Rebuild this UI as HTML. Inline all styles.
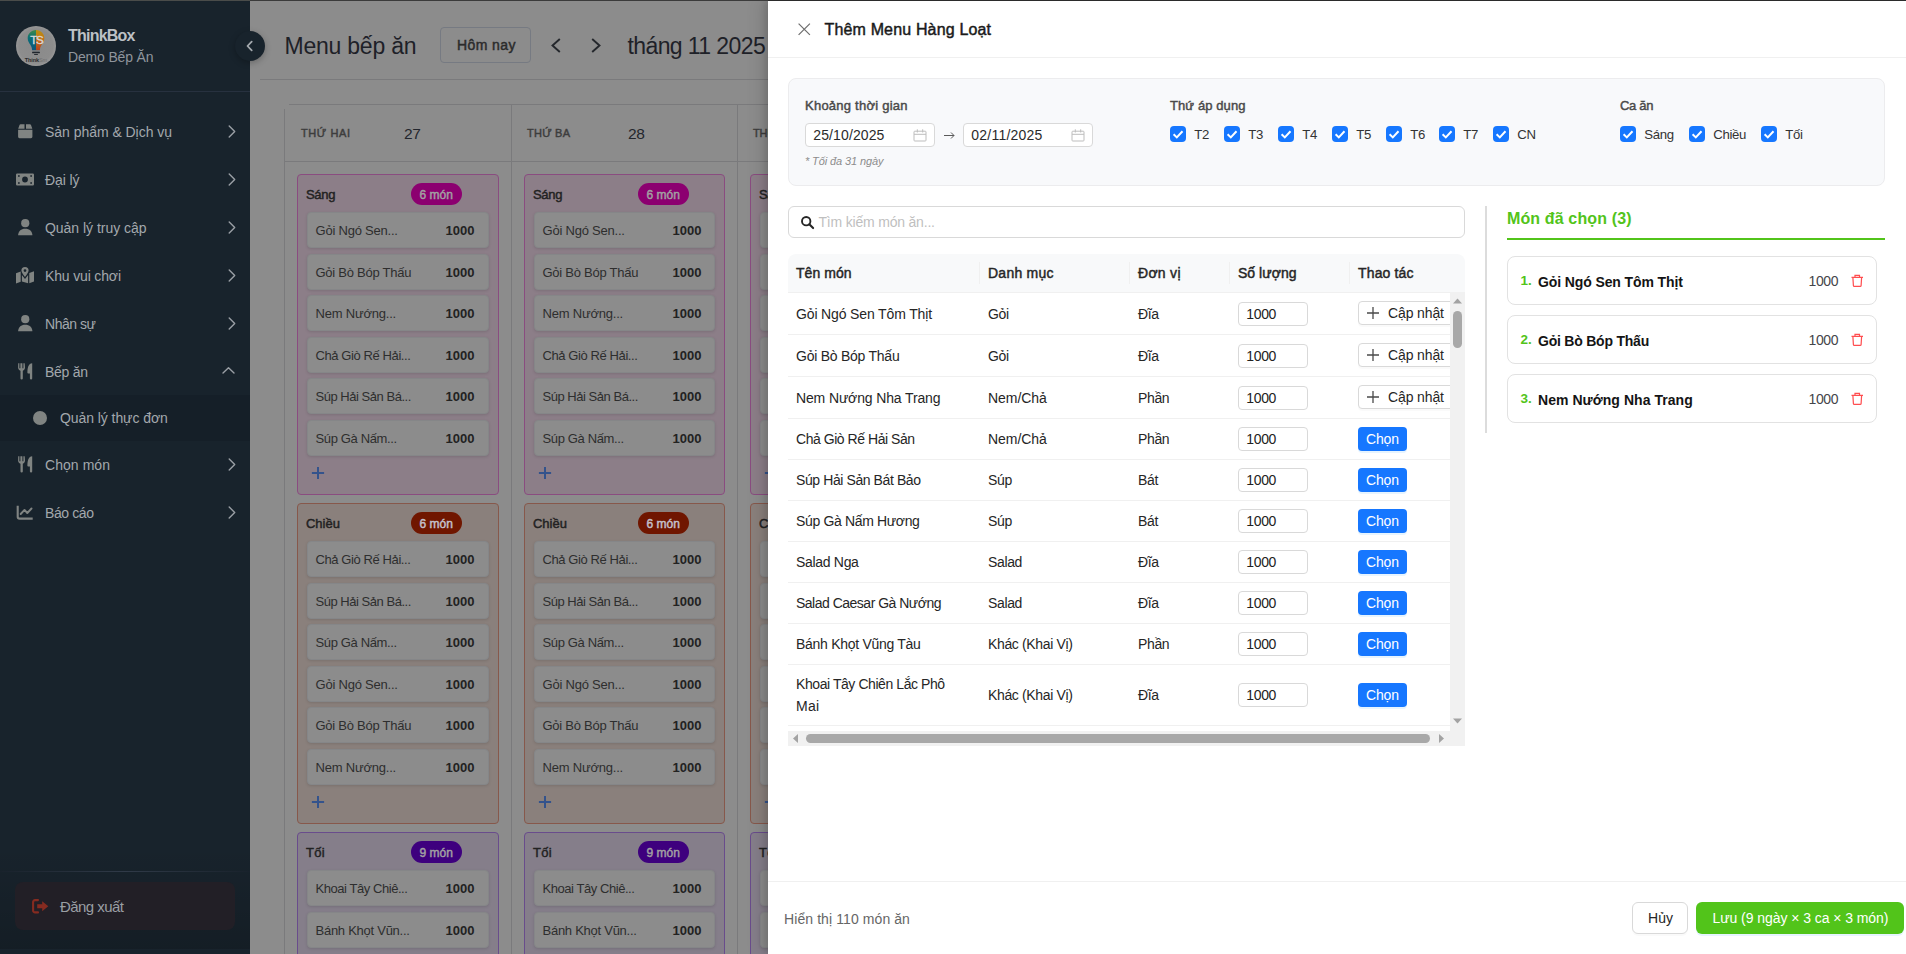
<!DOCTYPE html>
<html lang="vi"><head><meta charset="utf-8"><title>Menu bếp ăn</title>
<style>
*{box-sizing:border-box;margin:0;padding:0}
html,body{width:1906px;height:954px;overflow:hidden;background:#8c8c8c;font-family:"Liberation Sans",sans-serif;}
.t{position:absolute;white-space:nowrap;}
.b{position:absolute;}
svg{position:absolute;overflow:visible}
#side{position:absolute;left:0;top:0;width:250px;height:954px;background:#18232c;}
#main{position:absolute;left:250px;top:0;width:518px;height:954px;background:#8c8c8c;overflow:hidden}
#drawer{position:absolute;left:768px;top:0;width:1138px;height:954px;background:#fff;box-shadow:-6px 0 16px rgba(0,0,0,.12),-3px 0 6px rgba(0,0,0,.10);}
#topline{position:absolute;left:0;top:0;width:1906px;height:1px;background:linear-gradient(90deg,#4a4c4a 0,#4a4c4a 250px,#3b3b3b 250px,#3b3b3b 768px,#2b2b2b 768px);z-index:50}
</style></head><body>
<div id="side"><div class="b " style="left:0px;top:91px;width:250px;height:1px;background:#27313f"></div><svg style="left:16px;top:26px" width="40" height="40" viewBox="0 0 40 40">
<defs>
<linearGradient id="gl" x1="0" y1="0" x2="0" y2="1"><stop offset="0" stop-color="#3f8a49"/><stop offset=".4" stop-color="#0a6f76"/><stop offset="1" stop-color="#0d557b"/></linearGradient>
<linearGradient id="gr" x1="0" y1="0" x2="0" y2="1"><stop offset="0" stop-color="#b89212"/><stop offset=".45" stop-color="#c47216"/><stop offset="1" stop-color="#b3431f"/></linearGradient>
<radialGradient id="gc" cx=".5" cy=".5" r=".5"><stop offset="0" stop-color="#8a8a8a"/><stop offset=".85" stop-color="#8d8d8d"/><stop offset="1" stop-color="#979797"/></radialGradient>
</defs>
<circle cx="20" cy="20" r="20" fill="url(#gc)"/>
<path d="M20 4C15.300 4 11.700 7.700 11.700 12.200c0 2.800 1.300 4.600 2.500 6.400 1 1.500 1.900 3.100 1.900 5.600H20z" fill="url(#gl)"/>
<path d="M20 4c4.700 0 8.300 3.700 8.300 8.200 0 2.800-1.300 4.600-2.500 6.400-1 1.500-1.900 3.100-1.900 5.600H20z" fill="url(#gr)"/>
<rect x="16.100" y="24.300" width="7.800" height="1.300" fill="#747a7e"/>
<rect x="16.100" y="25.800" width="7.800" height="1.400" rx=".5" fill="#20262c"/>
<rect x="18" y="27.900" width="4" height="1" rx=".5" fill="#2a2f35"/>
<text x="20.300" y="17.500" font-size="11.500" font-family="Liberation Sans, sans-serif" fill="#d8d8d8" stroke="#d8d8d8" stroke-width=".35" text-anchor="middle" letter-spacing="-1.400">TS</text>
<text x="8.800" y="35.500" font-size="5.500" font-weight="700" font-family="Liberation Sans, sans-serif" fill="#2b2b2b" letter-spacing="-.1">Think<tspan fill="#707070" font-weight="400">Sm</tspan></text>
</svg><span id="t1" class="t " style="top:24px;font-size:16px;line-height:24px;color:#bdc1c5;font-weight:700;left:68px;letter-spacing:-0.770px;">ThinkBox</span><span id="t2" class="t " style="top:47px;font-size:14px;line-height:21px;color:#8f959c;left:68px;letter-spacing:-0.167px;">Demo Bếp Ăn</span><div class="b" style="left:235px;top:31px;width:30px;height:30px;border-radius:50%;background:#18232c;box-shadow:0 2px 6px rgba(0,0,0,.25);z-index:5"></div><svg style="left:245px;top:40px;z-index:6" width="8" height="12" viewBox="0 0 8 12"><g transform="translate(0.7 0)"><path d="M6 1.600L1.800 6l4.200 4.400" fill="none" stroke="#a4a9ae" stroke-width="1.800" stroke-linecap="round" stroke-linejoin="round"/></g></svg><div class="b " style="left:0px;top:395px;width:250px;height:46px;background:#151f28"></div><svg style="left:18px;top:124.0px" width="14.500" height="14.500" viewBox="0 0 14.500 14.500"><path d="M2.600 .3H6.500V4.700H.2L1.500 1.100A1.200 1.200 0 0 1 2.600 .3zM8 .3h3.900a1.200 1.200 0 0 1 1.100 .8L14.300 4.700H8zM.1 5.800H14.400V12.800a1.400 1.400 0 0 1-1.400 1.400H1.500A1.400 1.400 0 0 1 .1 12.800z" fill="#808482"/></svg><span id="t3" class="t " style="top:122px;font-size:14px;line-height:21px;color:#a3a8ad;left:45px;letter-spacing:-0.037px;">Sản phẩm &amp; Dịch vụ</span><svg style="left:228px;top:125.0px" width="8" height="13" viewBox="0 0 8 13"><path d="M1.200 1L6.700 6.500 1.200 12" fill="none" stroke="#9a9fa5" stroke-width="1.400" stroke-linecap="round" stroke-linejoin="round"/></svg><svg style="left:16px;top:173px" width="18" height="12" viewBox="0 0 18 12"><g transform="translate(0 0.5)"><path fill-rule="evenodd" d="M1.200 0H16.800A1.200 1.200 0 0 1 18 1.200V10.800A1.200 1.200 0 0 1 16.800 12H1.200A1.200 1.200 0 0 1 0 10.800V1.200A1.200 1.200 0 0 1 1.200 0zM2 1.700V3.300H3.700V1.700zM14.300 1.700V3.300H16V1.700zM2 8.700V10.300H3.700V8.700zM14.300 8.700V10.300H16V8.700zM9 3.100A2.900 2.900 0 1 0 9 8.900 2.900 2.900 0 1 0 9 3.100z" fill="#808482"/></g></svg><span id="t4" class="t " style="top:170px;font-size:14px;line-height:21px;color:#a3a8ad;left:45px;letter-spacing:-0.103px;">Đại lý</span><svg style="left:228px;top:173.0px" width="8" height="13" viewBox="0 0 8 13"><path d="M1.200 1L6.700 6.500 1.200 12" fill="none" stroke="#9a9fa5" stroke-width="1.400" stroke-linecap="round" stroke-linejoin="round"/></svg><svg style="left:18px;top:219.0px" width="14.500" height="16.500" viewBox="0 0 14.500 16.500"><circle cx="7.250" cy="4.200" r="4.100" fill="#808482"/><path d="M.1 16.300C.1 12.400 3 9.700 7.250 9.700S14.400 12.400 14.400 16.300z" fill="#808482"/></svg><span id="t5" class="t " style="top:218px;font-size:14px;line-height:21px;color:#a3a8ad;left:45px;letter-spacing:-0.029px;">Quản lý truy cập</span><svg style="left:228px;top:221.0px" width="8" height="13" viewBox="0 0 8 13"><path d="M1.200 1L6.700 6.500 1.200 12" fill="none" stroke="#9a9fa5" stroke-width="1.400" stroke-linecap="round" stroke-linejoin="round"/></svg><svg style="left:16px;top:267.0px" width="18" height="16.500" viewBox="0 0 18 16.500"><path fill-rule="evenodd" d="M9 0A3.600 3.600 0 0 1 12.600 3.600C12.600 5.600 10.300 8.300 9 10 7.700 8.300 5.400 5.600 5.400 3.600A3.600 3.600 0 0 1 9 0zM9 2.200A1.400 1.400 0 1 0 9 5 1.400 1.400 0 1 0 9 2.200z" fill="#808482"/><path d="M0 6.200L4.700 4.500V14.700L0 16.400zM13.300 6L18 4.300V14.500L13.300 16.200zM5.900 8.200L6.300 8.400 9 11.900 11.700 8.400 12.100 8.200V16.300L5.900 14.500z" fill="#808482"/></svg><span id="t6" class="t " style="top:266px;font-size:14px;line-height:21px;color:#a3a8ad;left:45px;letter-spacing:-0.152px;">Khu vui chơi</span><svg style="left:228px;top:269.0px" width="8" height="13" viewBox="0 0 8 13"><path d="M1.200 1L6.700 6.500 1.200 12" fill="none" stroke="#9a9fa5" stroke-width="1.400" stroke-linecap="round" stroke-linejoin="round"/></svg><svg style="left:18px;top:315.0px" width="14.500" height="16.500" viewBox="0 0 14.500 16.500"><circle cx="7.250" cy="4.200" r="4.100" fill="#808482"/><path d="M.1 16.300C.1 12.400 3 9.700 7.250 9.700S14.400 12.400 14.400 16.300z" fill="#808482"/></svg><span id="t7" class="t " style="top:314px;font-size:14px;line-height:21px;color:#a3a8ad;left:45px;letter-spacing:-0.456px;">Nhân sự</span><svg style="left:228px;top:317.0px" width="8" height="13" viewBox="0 0 8 13"><path d="M1.200 1L6.700 6.500 1.200 12" fill="none" stroke="#9a9fa5" stroke-width="1.400" stroke-linecap="round" stroke-linejoin="round"/></svg><svg style="left:18px;top:363.0px" width="14.500" height="16.500" viewBox="0 0 14.500 16.500"><path d="M.2 .3H1.400V5.200H2.400V.3H4.400V5.200H5.400V.3H6.700L7 4.600C7.100 6.200 6 7.300 4.800 7.800V15.400A1.100 1.100 0 0 1 2.500 15.400V7.800C1.100 7.300 0 6.200 .1 4.600zM14.200 .3V15.400A1.100 1.100 0 0 1 11.900 15.400V10.500H10.200C9.700 10.500 9.400 10.200 9.400 9.700 9.400 4.500 10.600 .5 14.200 .3z" fill="#808482"/></svg><span id="t8" class="t " style="top:362px;font-size:14px;line-height:21px;color:#a3a8ad;left:45px;letter-spacing:-0.275px;">Bếp ăn</span><svg style="left:222px;top:366px" width="13" height="8" viewBox="0 0 13 8"><g transform="translate(0 0.5)"><path d="M1 6.500L6.500 1.200 12 6.500" fill="none" stroke="#9a9fa5" stroke-width="1.400" stroke-linecap="round" stroke-linejoin="round"/></g></svg><svg style="left:18px;top:456.0px" width="14.500" height="16.500" viewBox="0 0 14.500 16.500"><path d="M.2 .3H1.400V5.200H2.400V.3H4.400V5.200H5.400V.3H6.700L7 4.600C7.100 6.200 6 7.300 4.800 7.800V15.400A1.100 1.100 0 0 1 2.500 15.400V7.800C1.100 7.300 0 6.200 .1 4.600zM14.200 .3V15.400A1.100 1.100 0 0 1 11.900 15.400V10.500H10.200C9.700 10.500 9.400 10.200 9.400 9.700 9.400 4.500 10.600 .5 14.200 .3z" fill="#808482"/></svg><span id="t9" class="t " style="top:455px;font-size:14px;line-height:21px;color:#a3a8ad;left:45px;letter-spacing:0.058px;">Chọn món</span><svg style="left:228px;top:458.0px" width="8" height="13" viewBox="0 0 8 13"><path d="M1.200 1L6.700 6.500 1.200 12" fill="none" stroke="#9a9fa5" stroke-width="1.400" stroke-linecap="round" stroke-linejoin="round"/></svg><svg style="left:16px;top:505px" width="17" height="14.500" viewBox="0 0 17 14.500"><g transform="translate(0.5 0.5)"><path d="M1.200 .3V11.300A1.800 1.800 0 0 0 3 13.100H16.200" fill="none" stroke="#808482" stroke-width="2.100" stroke-linecap="butt"/><path d="M4.200 8.500L8 4.400 10.800 7.500 15 3" fill="none" stroke="#808482" stroke-width="1.900" stroke-linecap="round" stroke-linejoin="round"/></g></svg><span id="t10" class="t " style="top:503px;font-size:14px;line-height:21px;color:#a3a8ad;left:45px;letter-spacing:-0.396px;">Báo cáo</span><svg style="left:228px;top:506.0px" width="8" height="13" viewBox="0 0 8 13"><path d="M1.200 1L6.700 6.500 1.200 12" fill="none" stroke="#9a9fa5" stroke-width="1.400" stroke-linecap="round" stroke-linejoin="round"/></svg><div class="b" style="left:33px;top:411px;width:14px;height:14px;border-radius:50%;background:#808482"></div><span id="t11" class="t " style="top:408px;font-size:14px;line-height:21px;color:#a3a8ad;left:60px;letter-spacing:-0.069px;">Quản lý thực đơn</span><div class="b " style="left:0px;top:846px;width:250px;height:103px;background:linear-gradient(180deg,rgba(0,0,0,0),rgba(0,0,0,.16))"></div><div class="b " style="left:0px;top:871px;width:250px;height:1px;background:linear-gradient(90deg,#19222c,#303a48 50%,#19222c)"></div><div class="b " style="left:15px;top:882px;width:220px;height:48px;background:#221f26;border-radius:8px"></div><svg style="left:32px;top:899px" width="16.500" height="14.500" viewBox="0 0 16.500 14.500"><path d="M6 1.100H3A1.900 1.900 0 0 0 1.100 3V11.500A1.900 1.900 0 0 0 3 13.400H6" fill="none" stroke="#862b20" stroke-width="2.100" stroke-linecap="round"/><path d="M5.200 5.200H10.200V2.300L16.300 7.250 10.200 12.200V9.300H5.200z" fill="#862b20"/></svg><span id="t12" class="t " style="top:896px;font-size:15px;line-height:22px;color:#9a9ea3;left:60px;letter-spacing:-0.561px;">Đăng xuất</span></div>
<div id="main"><span id="t13" class="t " style="top:29px;font-size:23px;line-height:34px;color:#1e2128;left:34.5px;letter-spacing:-0.228px;">Menu bếp ăn</span><div class="b " style="left:190px;top:27px;width:91px;height:36px;border:1px solid #767a82;border-radius:4px"></div><span id="t14" class="t " style="top:35px;font-size:14px;line-height:21px;color:#2b2b2b;-webkit-text-stroke:.45px;left:207px;letter-spacing:0.411px;">Hôm nay</span><svg style="left:301px;top:38px" width="10" height="15" viewBox="0 0 10 15"><path d="M8.800 1L1.500 7.500 8.800 14" fill="none" stroke="#24272c" stroke-width="1.900"/></svg><svg style="left:341px;top:38px" width="10" height="15" viewBox="0 0 10 15"><path d="M1.200 1L8.500 7.500 1.200 14" fill="none" stroke="#24272c" stroke-width="1.900"/></svg><span id="t15" class="t " style="top:29px;font-size:23px;line-height:34px;color:#1e2128;left:377.5px;letter-spacing:-0.599px;">tháng 11 2025</span><div class="b " style="left:10px;top:79px;width:520px;height:1px;background:#7a7a7c"></div><div class="b " style="left:39px;top:104px;width:500px;height:1px;background:#7a7a7c"></div><div class="b " style="left:35px;top:161px;width:500px;height:1px;background:#7a7a7c"></div><div class="b " style="left:34px;top:109px;width:1px;height:860px;background:#7a7a7c"></div><div class="b " style="left:261px;top:104px;width:1px;height:860px;background:#7a7a7c"></div><div class="b " style="left:487px;top:104px;width:1px;height:860px;background:#7a7a7c"></div><span id="t16" class="t " style="top:125px;font-size:11px;line-height:16px;color:#3d3d3d;-webkit-text-stroke:.45px;left:51px;letter-spacing:0.591px;">THỨ HAI</span><span id="t17" class="t " style="top:122px;font-size:15.5px;line-height:23px;color:#23262d;left:154px;letter-spacing:-.35px;">27</span><span id="t18" class="t " style="top:125px;font-size:11px;line-height:16px;color:#3d3d3d;-webkit-text-stroke:.45px;left:277px;letter-spacing:0.241px;">THỨ BA</span><span id="t19" class="t " style="top:122px;font-size:15.5px;line-height:23px;color:#23262d;left:378px;letter-spacing:-.35px;">28</span><span id="t20" class="t " style="top:125px;font-size:11px;line-height:16px;color:#3d3d3d;-webkit-text-stroke:.45px;left:503px;letter-spacing:-0.106px;">THỨ TƯ</span><div class="b " style="left:47px;top:174px;width:202px;height:321px;background:#8c7e88;border:1px solid #8a4c80;border-radius:4px"><span id="t21" class="t " style="top:10px;font-size:13px;line-height:20px;color:#222;-webkit-text-stroke:.45px;left:8px;letter-spacing:-0.325px;">Sáng</span><div class="b" style="left:113px;top:8px;width:51px;height:22px;border-radius:11px;background:#8c0070"></div><span id="t22" class="t " style="top:11px;font-size:12px;line-height:18px;color:#a2a0a2;-webkit-text-stroke:.45px;left:121.5px;">6 món</span><div class="b" style="left:8.500px;top:37px;width:182.5px;height:36px;border-radius:4px;background:#8c8c8c;border:1px solid #858688;box-shadow:0 1px 3px rgba(0,0,0,.12)"><span id="t23" class="t " style="top:8px;font-size:13px;line-height:20px;color:#2e2e2e;left:8px;letter-spacing:-0.214px;">Gỏi Ngó Sen...</span><span id="t24" class="t " style="top:8px;font-size:13px;line-height:20px;color:#222;font-weight:700;left:138px;">1000</span></div><div class="b" style="left:8.500px;top:79px;width:182.5px;height:36px;border-radius:4px;background:#8c8c8c;border:1px solid #858688;box-shadow:0 1px 3px rgba(0,0,0,.12)"><span id="t25" class="t " style="top:8px;font-size:13px;line-height:20px;color:#2e2e2e;left:8px;letter-spacing:-0.250px;">Gỏi Bò Bóp Thấu</span><span id="t26" class="t " style="top:8px;font-size:13px;line-height:20px;color:#222;font-weight:700;left:138px;">1000</span></div><div class="b" style="left:8.500px;top:120px;width:182.5px;height:36px;border-radius:4px;background:#8c8c8c;border:1px solid #858688;box-shadow:0 1px 3px rgba(0,0,0,.12)"><span id="t27" class="t " style="top:8px;font-size:13px;line-height:20px;color:#2e2e2e;left:8px;letter-spacing:-0.208px;">Nem Nướng...</span><span id="t28" class="t " style="top:8px;font-size:13px;line-height:20px;color:#222;font-weight:700;left:138px;">1000</span></div><div class="b" style="left:8.500px;top:162px;width:182.5px;height:36px;border-radius:4px;background:#8c8c8c;border:1px solid #858688;box-shadow:0 1px 3px rgba(0,0,0,.12)"><span id="t29" class="t " style="top:8px;font-size:13px;line-height:20px;color:#2e2e2e;left:8px;letter-spacing:-0.405px;">Chả Giò Rế Hải...</span><span id="t30" class="t " style="top:8px;font-size:13px;line-height:20px;color:#222;font-weight:700;left:138px;">1000</span></div><div class="b" style="left:8.500px;top:203px;width:182.5px;height:36px;border-radius:4px;background:#8c8c8c;border:1px solid #858688;box-shadow:0 1px 3px rgba(0,0,0,.12)"><span id="t31" class="t " style="top:8px;font-size:13px;line-height:20px;color:#2e2e2e;left:8px;letter-spacing:-0.471px;">Súp Hải Sản Bá...</span><span id="t32" class="t " style="top:8px;font-size:13px;line-height:20px;color:#222;font-weight:700;left:138px;">1000</span></div><div class="b" style="left:8.500px;top:245px;width:182.5px;height:36px;border-radius:4px;background:#8c8c8c;border:1px solid #858688;box-shadow:0 1px 3px rgba(0,0,0,.12)"><span id="t33" class="t " style="top:8px;font-size:13px;line-height:20px;color:#2e2e2e;left:8px;letter-spacing:-0.365px;">Súp Gà Nấm...</span><span id="t34" class="t " style="top:8px;font-size:13px;line-height:20px;color:#222;font-weight:700;left:138px;">1000</span></div><svg style="left:13px;top:291px" width="14" height="14" viewBox="0 0 14 14"><path d="M7 .9V13.100M.9 7H13.100" stroke="#34538c" stroke-width="2" fill="none"/></svg></div><div class="b " style="left:47px;top:503px;width:202px;height:321px;background:#8a807c;border:1px solid #87584b;border-radius:4px"><span id="t35" class="t " style="top:10px;font-size:13px;line-height:20px;color:#222;-webkit-text-stroke:.45px;left:8px;letter-spacing:-0.017px;">Chiều</span><div class="b" style="left:113px;top:8px;width:51px;height:22px;border-radius:11px;background:#701600"></div><span id="t36" class="t " style="top:11px;font-size:12px;line-height:18px;color:#c4c0cc;-webkit-text-stroke:.45px;left:121.5px;">6 món</span><div class="b" style="left:8.500px;top:37px;width:182.5px;height:36px;border-radius:4px;background:#8c8c8c;border:1px solid #858688;box-shadow:0 1px 3px rgba(0,0,0,.12)"><span id="t37" class="t " style="top:8px;font-size:13px;line-height:20px;color:#2e2e2e;left:8px;letter-spacing:-0.405px;">Chả Giò Rế Hải...</span><span id="t38" class="t " style="top:8px;font-size:13px;line-height:20px;color:#222;font-weight:700;left:138px;">1000</span></div><div class="b" style="left:8.500px;top:79px;width:182.5px;height:36px;border-radius:4px;background:#8c8c8c;border:1px solid #858688;box-shadow:0 1px 3px rgba(0,0,0,.12)"><span id="t39" class="t " style="top:8px;font-size:13px;line-height:20px;color:#2e2e2e;left:8px;letter-spacing:-0.471px;">Súp Hải Sản Bá...</span><span id="t40" class="t " style="top:8px;font-size:13px;line-height:20px;color:#222;font-weight:700;left:138px;">1000</span></div><div class="b" style="left:8.500px;top:120px;width:182.5px;height:36px;border-radius:4px;background:#8c8c8c;border:1px solid #858688;box-shadow:0 1px 3px rgba(0,0,0,.12)"><span id="t41" class="t " style="top:8px;font-size:13px;line-height:20px;color:#2e2e2e;left:8px;letter-spacing:-0.365px;">Súp Gà Nấm...</span><span id="t42" class="t " style="top:8px;font-size:13px;line-height:20px;color:#222;font-weight:700;left:138px;">1000</span></div><div class="b" style="left:8.500px;top:162px;width:182.5px;height:36px;border-radius:4px;background:#8c8c8c;border:1px solid #858688;box-shadow:0 1px 3px rgba(0,0,0,.12)"><span id="t43" class="t " style="top:8px;font-size:13px;line-height:20px;color:#2e2e2e;left:8px;letter-spacing:-0.214px;">Gỏi Ngó Sen...</span><span id="t44" class="t " style="top:8px;font-size:13px;line-height:20px;color:#222;font-weight:700;left:138px;">1000</span></div><div class="b" style="left:8.500px;top:203px;width:182.5px;height:36px;border-radius:4px;background:#8c8c8c;border:1px solid #858688;box-shadow:0 1px 3px rgba(0,0,0,.12)"><span id="t45" class="t " style="top:8px;font-size:13px;line-height:20px;color:#2e2e2e;left:8px;letter-spacing:-0.250px;">Gỏi Bò Bóp Thấu</span><span id="t46" class="t " style="top:8px;font-size:13px;line-height:20px;color:#222;font-weight:700;left:138px;">1000</span></div><div class="b" style="left:8.500px;top:245px;width:182.5px;height:36px;border-radius:4px;background:#8c8c8c;border:1px solid #858688;box-shadow:0 1px 3px rgba(0,0,0,.12)"><span id="t47" class="t " style="top:8px;font-size:13px;line-height:20px;color:#2e2e2e;left:8px;letter-spacing:-0.208px;">Nem Nướng...</span><span id="t48" class="t " style="top:8px;font-size:13px;line-height:20px;color:#222;font-weight:700;left:138px;">1000</span></div><svg style="left:13px;top:291px" width="14" height="14" viewBox="0 0 14 14"><path d="M7 .9V13.100M.9 7H13.100" stroke="#34538c" stroke-width="2" fill="none"/></svg></div><div class="b " style="left:47px;top:832px;width:202px;height:321px;background:#857e8a;border:1px solid #694c8c;border-radius:4px"><span id="t49" class="t " style="top:10px;font-size:13px;line-height:20px;color:#222;-webkit-text-stroke:.45px;left:8px;letter-spacing:0.269px;">Tối</span><div class="b" style="left:113px;top:8px;width:51px;height:22px;border-radius:11px;background:#3e007e"></div><span id="t50" class="t " style="top:11px;font-size:12px;line-height:18px;color:#a2a0a2;-webkit-text-stroke:.45px;left:121.5px;">9 món</span><div class="b" style="left:8.500px;top:37px;width:182.5px;height:36px;border-radius:4px;background:#8c8c8c;border:1px solid #858688;box-shadow:0 1px 3px rgba(0,0,0,.12)"><span id="t51" class="t " style="top:8px;font-size:13px;line-height:20px;color:#2e2e2e;left:8px;letter-spacing:-0.443px;">Khoai Tây Chiê...</span><span id="t52" class="t " style="top:8px;font-size:13px;line-height:20px;color:#222;font-weight:700;left:138px;">1000</span></div><div class="b" style="left:8.500px;top:79px;width:182.5px;height:36px;border-radius:4px;background:#8c8c8c;border:1px solid #858688;box-shadow:0 1px 3px rgba(0,0,0,.12)"><span id="t53" class="t " style="top:8px;font-size:13px;line-height:20px;color:#2e2e2e;left:8px;letter-spacing:-0.260px;">Bánh Khọt Vũn...</span><span id="t54" class="t " style="top:8px;font-size:13px;line-height:20px;color:#222;font-weight:700;left:138px;">1000</span></div></div><div class="b " style="left:274px;top:174px;width:201px;height:321px;background:#8c7e88;border:1px solid #8a4c80;border-radius:4px"><span id="t55" class="t " style="top:10px;font-size:13px;line-height:20px;color:#222;-webkit-text-stroke:.45px;left:8px;letter-spacing:-0.325px;">Sáng</span><div class="b" style="left:113px;top:8px;width:51px;height:22px;border-radius:11px;background:#8c0070"></div><span id="t56" class="t " style="top:11px;font-size:12px;line-height:18px;color:#a2a0a2;-webkit-text-stroke:.45px;left:121.5px;">6 món</span><div class="b" style="left:8.500px;top:37px;width:181.5px;height:36px;border-radius:4px;background:#8c8c8c;border:1px solid #858688;box-shadow:0 1px 3px rgba(0,0,0,.12)"><span id="t57" class="t " style="top:8px;font-size:13px;line-height:20px;color:#2e2e2e;left:8px;letter-spacing:-0.214px;">Gỏi Ngó Sen...</span><span id="t58" class="t " style="top:8px;font-size:13px;line-height:20px;color:#222;font-weight:700;left:138px;">1000</span></div><div class="b" style="left:8.500px;top:79px;width:181.5px;height:36px;border-radius:4px;background:#8c8c8c;border:1px solid #858688;box-shadow:0 1px 3px rgba(0,0,0,.12)"><span id="t59" class="t " style="top:8px;font-size:13px;line-height:20px;color:#2e2e2e;left:8px;letter-spacing:-0.250px;">Gỏi Bò Bóp Thấu</span><span id="t60" class="t " style="top:8px;font-size:13px;line-height:20px;color:#222;font-weight:700;left:138px;">1000</span></div><div class="b" style="left:8.500px;top:120px;width:181.5px;height:36px;border-radius:4px;background:#8c8c8c;border:1px solid #858688;box-shadow:0 1px 3px rgba(0,0,0,.12)"><span id="t61" class="t " style="top:8px;font-size:13px;line-height:20px;color:#2e2e2e;left:8px;letter-spacing:-0.208px;">Nem Nướng...</span><span id="t62" class="t " style="top:8px;font-size:13px;line-height:20px;color:#222;font-weight:700;left:138px;">1000</span></div><div class="b" style="left:8.500px;top:162px;width:181.5px;height:36px;border-radius:4px;background:#8c8c8c;border:1px solid #858688;box-shadow:0 1px 3px rgba(0,0,0,.12)"><span id="t63" class="t " style="top:8px;font-size:13px;line-height:20px;color:#2e2e2e;left:8px;letter-spacing:-0.405px;">Chả Giò Rế Hải...</span><span id="t64" class="t " style="top:8px;font-size:13px;line-height:20px;color:#222;font-weight:700;left:138px;">1000</span></div><div class="b" style="left:8.500px;top:203px;width:181.5px;height:36px;border-radius:4px;background:#8c8c8c;border:1px solid #858688;box-shadow:0 1px 3px rgba(0,0,0,.12)"><span id="t65" class="t " style="top:8px;font-size:13px;line-height:20px;color:#2e2e2e;left:8px;letter-spacing:-0.471px;">Súp Hải Sản Bá...</span><span id="t66" class="t " style="top:8px;font-size:13px;line-height:20px;color:#222;font-weight:700;left:138px;">1000</span></div><div class="b" style="left:8.500px;top:245px;width:181.5px;height:36px;border-radius:4px;background:#8c8c8c;border:1px solid #858688;box-shadow:0 1px 3px rgba(0,0,0,.12)"><span id="t67" class="t " style="top:8px;font-size:13px;line-height:20px;color:#2e2e2e;left:8px;letter-spacing:-0.365px;">Súp Gà Nấm...</span><span id="t68" class="t " style="top:8px;font-size:13px;line-height:20px;color:#222;font-weight:700;left:138px;">1000</span></div><svg style="left:13px;top:291px" width="14" height="14" viewBox="0 0 14 14"><path d="M7 .9V13.100M.9 7H13.100" stroke="#34538c" stroke-width="2" fill="none"/></svg></div><div class="b " style="left:274px;top:503px;width:201px;height:321px;background:#8a807c;border:1px solid #87584b;border-radius:4px"><span id="t69" class="t " style="top:10px;font-size:13px;line-height:20px;color:#222;-webkit-text-stroke:.45px;left:8px;letter-spacing:-0.017px;">Chiều</span><div class="b" style="left:113px;top:8px;width:51px;height:22px;border-radius:11px;background:#701600"></div><span id="t70" class="t " style="top:11px;font-size:12px;line-height:18px;color:#c4c0cc;-webkit-text-stroke:.45px;left:121.5px;">6 món</span><div class="b" style="left:8.500px;top:37px;width:181.5px;height:36px;border-radius:4px;background:#8c8c8c;border:1px solid #858688;box-shadow:0 1px 3px rgba(0,0,0,.12)"><span id="t71" class="t " style="top:8px;font-size:13px;line-height:20px;color:#2e2e2e;left:8px;letter-spacing:-0.405px;">Chả Giò Rế Hải...</span><span id="t72" class="t " style="top:8px;font-size:13px;line-height:20px;color:#222;font-weight:700;left:138px;">1000</span></div><div class="b" style="left:8.500px;top:79px;width:181.5px;height:36px;border-radius:4px;background:#8c8c8c;border:1px solid #858688;box-shadow:0 1px 3px rgba(0,0,0,.12)"><span id="t73" class="t " style="top:8px;font-size:13px;line-height:20px;color:#2e2e2e;left:8px;letter-spacing:-0.471px;">Súp Hải Sản Bá...</span><span id="t74" class="t " style="top:8px;font-size:13px;line-height:20px;color:#222;font-weight:700;left:138px;">1000</span></div><div class="b" style="left:8.500px;top:120px;width:181.5px;height:36px;border-radius:4px;background:#8c8c8c;border:1px solid #858688;box-shadow:0 1px 3px rgba(0,0,0,.12)"><span id="t75" class="t " style="top:8px;font-size:13px;line-height:20px;color:#2e2e2e;left:8px;letter-spacing:-0.365px;">Súp Gà Nấm...</span><span id="t76" class="t " style="top:8px;font-size:13px;line-height:20px;color:#222;font-weight:700;left:138px;">1000</span></div><div class="b" style="left:8.500px;top:162px;width:181.5px;height:36px;border-radius:4px;background:#8c8c8c;border:1px solid #858688;box-shadow:0 1px 3px rgba(0,0,0,.12)"><span id="t77" class="t " style="top:8px;font-size:13px;line-height:20px;color:#2e2e2e;left:8px;letter-spacing:-0.214px;">Gỏi Ngó Sen...</span><span id="t78" class="t " style="top:8px;font-size:13px;line-height:20px;color:#222;font-weight:700;left:138px;">1000</span></div><div class="b" style="left:8.500px;top:203px;width:181.5px;height:36px;border-radius:4px;background:#8c8c8c;border:1px solid #858688;box-shadow:0 1px 3px rgba(0,0,0,.12)"><span id="t79" class="t " style="top:8px;font-size:13px;line-height:20px;color:#2e2e2e;left:8px;letter-spacing:-0.250px;">Gỏi Bò Bóp Thấu</span><span id="t80" class="t " style="top:8px;font-size:13px;line-height:20px;color:#222;font-weight:700;left:138px;">1000</span></div><div class="b" style="left:8.500px;top:245px;width:181.5px;height:36px;border-radius:4px;background:#8c8c8c;border:1px solid #858688;box-shadow:0 1px 3px rgba(0,0,0,.12)"><span id="t81" class="t " style="top:8px;font-size:13px;line-height:20px;color:#2e2e2e;left:8px;letter-spacing:-0.208px;">Nem Nướng...</span><span id="t82" class="t " style="top:8px;font-size:13px;line-height:20px;color:#222;font-weight:700;left:138px;">1000</span></div><svg style="left:13px;top:291px" width="14" height="14" viewBox="0 0 14 14"><path d="M7 .9V13.100M.9 7H13.100" stroke="#34538c" stroke-width="2" fill="none"/></svg></div><div class="b " style="left:274px;top:832px;width:201px;height:321px;background:#857e8a;border:1px solid #694c8c;border-radius:4px"><span id="t83" class="t " style="top:10px;font-size:13px;line-height:20px;color:#222;-webkit-text-stroke:.45px;left:8px;letter-spacing:0.269px;">Tối</span><div class="b" style="left:113px;top:8px;width:51px;height:22px;border-radius:11px;background:#3e007e"></div><span id="t84" class="t " style="top:11px;font-size:12px;line-height:18px;color:#a2a0a2;-webkit-text-stroke:.45px;left:121.5px;">9 món</span><div class="b" style="left:8.500px;top:37px;width:181.5px;height:36px;border-radius:4px;background:#8c8c8c;border:1px solid #858688;box-shadow:0 1px 3px rgba(0,0,0,.12)"><span id="t85" class="t " style="top:8px;font-size:13px;line-height:20px;color:#2e2e2e;left:8px;letter-spacing:-0.443px;">Khoai Tây Chiê...</span><span id="t86" class="t " style="top:8px;font-size:13px;line-height:20px;color:#222;font-weight:700;left:138px;">1000</span></div><div class="b" style="left:8.500px;top:79px;width:181.5px;height:36px;border-radius:4px;background:#8c8c8c;border:1px solid #858688;box-shadow:0 1px 3px rgba(0,0,0,.12)"><span id="t87" class="t " style="top:8px;font-size:13px;line-height:20px;color:#2e2e2e;left:8px;letter-spacing:-0.260px;">Bánh Khọt Vũn...</span><span id="t88" class="t " style="top:8px;font-size:13px;line-height:20px;color:#222;font-weight:700;left:138px;">1000</span></div></div><div class="b " style="left:500px;top:174px;width:201px;height:321px;background:#8c7e88;border:1px solid #8a4c80;border-radius:4px"><span id="t89" class="t " style="top:10px;font-size:13px;line-height:20px;color:#222;-webkit-text-stroke:.45px;left:8px;letter-spacing:-0.325px;">Sáng</span><div class="b" style="left:113px;top:8px;width:51px;height:22px;border-radius:11px;background:#8c0070"></div><span id="t90" class="t " style="top:11px;font-size:12px;line-height:18px;color:#a2a0a2;-webkit-text-stroke:.45px;left:121.5px;">6 món</span><div class="b" style="left:8.500px;top:37px;width:181.5px;height:36px;border-radius:4px;background:#8c8c8c;border:1px solid #858688;box-shadow:0 1px 3px rgba(0,0,0,.12)"><span id="t91" class="t " style="top:8px;font-size:13px;line-height:20px;color:#2e2e2e;left:8px;letter-spacing:-0.214px;">Gỏi Ngó Sen...</span><span id="t92" class="t " style="top:8px;font-size:13px;line-height:20px;color:#222;font-weight:700;left:138px;">1000</span></div><div class="b" style="left:8.500px;top:79px;width:181.5px;height:36px;border-radius:4px;background:#8c8c8c;border:1px solid #858688;box-shadow:0 1px 3px rgba(0,0,0,.12)"><span id="t93" class="t " style="top:8px;font-size:13px;line-height:20px;color:#2e2e2e;left:8px;letter-spacing:-0.250px;">Gỏi Bò Bóp Thấu</span><span id="t94" class="t " style="top:8px;font-size:13px;line-height:20px;color:#222;font-weight:700;left:138px;">1000</span></div><div class="b" style="left:8.500px;top:120px;width:181.5px;height:36px;border-radius:4px;background:#8c8c8c;border:1px solid #858688;box-shadow:0 1px 3px rgba(0,0,0,.12)"><span id="t95" class="t " style="top:8px;font-size:13px;line-height:20px;color:#2e2e2e;left:8px;letter-spacing:-0.208px;">Nem Nướng...</span><span id="t96" class="t " style="top:8px;font-size:13px;line-height:20px;color:#222;font-weight:700;left:138px;">1000</span></div><div class="b" style="left:8.500px;top:162px;width:181.5px;height:36px;border-radius:4px;background:#8c8c8c;border:1px solid #858688;box-shadow:0 1px 3px rgba(0,0,0,.12)"><span id="t97" class="t " style="top:8px;font-size:13px;line-height:20px;color:#2e2e2e;left:8px;letter-spacing:-0.405px;">Chả Giò Rế Hải...</span><span id="t98" class="t " style="top:8px;font-size:13px;line-height:20px;color:#222;font-weight:700;left:138px;">1000</span></div><div class="b" style="left:8.500px;top:203px;width:181.5px;height:36px;border-radius:4px;background:#8c8c8c;border:1px solid #858688;box-shadow:0 1px 3px rgba(0,0,0,.12)"><span id="t99" class="t " style="top:8px;font-size:13px;line-height:20px;color:#2e2e2e;left:8px;letter-spacing:-0.471px;">Súp Hải Sản Bá...</span><span id="t100" class="t " style="top:8px;font-size:13px;line-height:20px;color:#222;font-weight:700;left:138px;">1000</span></div><div class="b" style="left:8.500px;top:245px;width:181.5px;height:36px;border-radius:4px;background:#8c8c8c;border:1px solid #858688;box-shadow:0 1px 3px rgba(0,0,0,.12)"><span id="t101" class="t " style="top:8px;font-size:13px;line-height:20px;color:#2e2e2e;left:8px;letter-spacing:-0.365px;">Súp Gà Nấm...</span><span id="t102" class="t " style="top:8px;font-size:13px;line-height:20px;color:#222;font-weight:700;left:138px;">1000</span></div><svg style="left:13px;top:291px" width="14" height="14" viewBox="0 0 14 14"><path d="M7 .9V13.100M.9 7H13.100" stroke="#34538c" stroke-width="2" fill="none"/></svg></div><div class="b " style="left:500px;top:503px;width:201px;height:321px;background:#8a807c;border:1px solid #87584b;border-radius:4px"><span id="t103" class="t " style="top:10px;font-size:13px;line-height:20px;color:#222;-webkit-text-stroke:.45px;left:8px;letter-spacing:-0.017px;">Chiều</span><div class="b" style="left:113px;top:8px;width:51px;height:22px;border-radius:11px;background:#701600"></div><span id="t104" class="t " style="top:11px;font-size:12px;line-height:18px;color:#c4c0cc;-webkit-text-stroke:.45px;left:121.5px;">6 món</span><div class="b" style="left:8.500px;top:37px;width:181.5px;height:36px;border-radius:4px;background:#8c8c8c;border:1px solid #858688;box-shadow:0 1px 3px rgba(0,0,0,.12)"><span id="t105" class="t " style="top:8px;font-size:13px;line-height:20px;color:#2e2e2e;left:8px;letter-spacing:-0.405px;">Chả Giò Rế Hải...</span><span id="t106" class="t " style="top:8px;font-size:13px;line-height:20px;color:#222;font-weight:700;left:138px;">1000</span></div><div class="b" style="left:8.500px;top:79px;width:181.5px;height:36px;border-radius:4px;background:#8c8c8c;border:1px solid #858688;box-shadow:0 1px 3px rgba(0,0,0,.12)"><span id="t107" class="t " style="top:8px;font-size:13px;line-height:20px;color:#2e2e2e;left:8px;letter-spacing:-0.471px;">Súp Hải Sản Bá...</span><span id="t108" class="t " style="top:8px;font-size:13px;line-height:20px;color:#222;font-weight:700;left:138px;">1000</span></div><div class="b" style="left:8.500px;top:120px;width:181.5px;height:36px;border-radius:4px;background:#8c8c8c;border:1px solid #858688;box-shadow:0 1px 3px rgba(0,0,0,.12)"><span id="t109" class="t " style="top:8px;font-size:13px;line-height:20px;color:#2e2e2e;left:8px;letter-spacing:-0.365px;">Súp Gà Nấm...</span><span id="t110" class="t " style="top:8px;font-size:13px;line-height:20px;color:#222;font-weight:700;left:138px;">1000</span></div><div class="b" style="left:8.500px;top:162px;width:181.5px;height:36px;border-radius:4px;background:#8c8c8c;border:1px solid #858688;box-shadow:0 1px 3px rgba(0,0,0,.12)"><span id="t111" class="t " style="top:8px;font-size:13px;line-height:20px;color:#2e2e2e;left:8px;letter-spacing:-0.214px;">Gỏi Ngó Sen...</span><span id="t112" class="t " style="top:8px;font-size:13px;line-height:20px;color:#222;font-weight:700;left:138px;">1000</span></div><div class="b" style="left:8.500px;top:203px;width:181.5px;height:36px;border-radius:4px;background:#8c8c8c;border:1px solid #858688;box-shadow:0 1px 3px rgba(0,0,0,.12)"><span id="t113" class="t " style="top:8px;font-size:13px;line-height:20px;color:#2e2e2e;left:8px;letter-spacing:-0.250px;">Gỏi Bò Bóp Thấu</span><span id="t114" class="t " style="top:8px;font-size:13px;line-height:20px;color:#222;font-weight:700;left:138px;">1000</span></div><div class="b" style="left:8.500px;top:245px;width:181.5px;height:36px;border-radius:4px;background:#8c8c8c;border:1px solid #858688;box-shadow:0 1px 3px rgba(0,0,0,.12)"><span id="t115" class="t " style="top:8px;font-size:13px;line-height:20px;color:#2e2e2e;left:8px;letter-spacing:-0.208px;">Nem Nướng...</span><span id="t116" class="t " style="top:8px;font-size:13px;line-height:20px;color:#222;font-weight:700;left:138px;">1000</span></div><svg style="left:13px;top:291px" width="14" height="14" viewBox="0 0 14 14"><path d="M7 .9V13.100M.9 7H13.100" stroke="#34538c" stroke-width="2" fill="none"/></svg></div><div class="b " style="left:500px;top:832px;width:201px;height:321px;background:#857e8a;border:1px solid #694c8c;border-radius:4px"><span id="t117" class="t " style="top:10px;font-size:13px;line-height:20px;color:#222;-webkit-text-stroke:.45px;left:8px;letter-spacing:0.269px;">Tối</span><div class="b" style="left:113px;top:8px;width:51px;height:22px;border-radius:11px;background:#3e007e"></div><span id="t118" class="t " style="top:11px;font-size:12px;line-height:18px;color:#a2a0a2;-webkit-text-stroke:.45px;left:121.5px;">9 món</span><div class="b" style="left:8.500px;top:37px;width:181.5px;height:36px;border-radius:4px;background:#8c8c8c;border:1px solid #858688;box-shadow:0 1px 3px rgba(0,0,0,.12)"><span id="t119" class="t " style="top:8px;font-size:13px;line-height:20px;color:#2e2e2e;left:8px;letter-spacing:-0.443px;">Khoai Tây Chiê...</span><span id="t120" class="t " style="top:8px;font-size:13px;line-height:20px;color:#222;font-weight:700;left:138px;">1000</span></div><div class="b" style="left:8.500px;top:79px;width:181.5px;height:36px;border-radius:4px;background:#8c8c8c;border:1px solid #858688;box-shadow:0 1px 3px rgba(0,0,0,.12)"><span id="t121" class="t " style="top:8px;font-size:13px;line-height:20px;color:#2e2e2e;left:8px;letter-spacing:-0.260px;">Bánh Khọt Vũn...</span><span id="t122" class="t " style="top:8px;font-size:13px;line-height:20px;color:#222;font-weight:700;left:138px;">1000</span></div></div></div>
<div id="drawer"><svg style="left:30px;top:23px" width="12.500" height="12.500" viewBox="0 0 12.500 12.500"><path d="M.6 .6L11.900 11.900M11.900 .6L.6 11.900" stroke="#6f6f6f" stroke-width="1.250" fill="none"/></svg><span id="t123" class="t " style="top:18px;font-size:16px;line-height:24px;color:#1a1a1a;-webkit-text-stroke:.45px;left:56.5px;letter-spacing:0.158px;">Thêm Menu Hàng Loạt</span><div class="b " style="left:0px;top:57px;width:1138px;height:1px;background:#f0f0f0"></div><div class="b " style="left:20px;top:78px;width:1097px;height:108px;background:#f8f9fb;border:1px solid #ececee;border-radius:8px"></div><span id="t124" class="t " style="top:96px;font-size:13px;line-height:20px;color:#4a4a4a;-webkit-text-stroke:.45px;left:37px;letter-spacing:0.241px;">Khoảng thời gian</span><span id="t125" class="t " style="top:96px;font-size:13px;line-height:20px;color:#4a4a4a;-webkit-text-stroke:.45px;left:402px;letter-spacing:0.102px;">Thứ áp dụng</span><span id="t126" class="t " style="top:96px;font-size:13px;line-height:20px;color:#4a4a4a;-webkit-text-stroke:.45px;left:852px;letter-spacing:-0.301px;">Ca ăn</span><div class="b " style="left:37px;top:123px;width:130px;height:24px;background:#fff;border:1px solid #d9d9d9;border-radius:4px"></div><span id="t127" class="t " style="top:125px;font-size:14px;line-height:21px;color:#2b2b2b;left:45.299999999999955px;letter-spacing:0.114px;">25/10/2025</span><svg style="left:145px;top:129px" width="13" height="12.500" viewBox="0 0 13 12.500"><g transform="translate(0.5 0)"><path d="M1.300 2.200H11.700A.8 .8 0 0 1 12.500 3V11.200A.8 .8 0 0 1 11.700 12H1.300A.8 .8 0 0 1 .5 11.200V3A.8 .8 0 0 1 1.300 2.200zM.5 5.300H12.500M3.800 .3V3.500M9.200 .3V3.500" fill="none" stroke="#bdbdbd" stroke-width="1"/></g></svg><div class="b " style="left:195px;top:123px;width:130px;height:24px;background:#fff;border:1px solid #d9d9d9;border-radius:4px"></div><span id="t128" class="t " style="top:125px;font-size:14px;line-height:21px;color:#2b2b2b;left:203.29999999999995px;letter-spacing:0.230px;">02/11/2025</span><svg style="left:303px;top:129px" width="13" height="12.500" viewBox="0 0 13 12.500"><g transform="translate(0.5 0)"><path d="M1.300 2.200H11.700A.8 .8 0 0 1 12.500 3V11.200A.8 .8 0 0 1 11.700 12H1.300A.8 .8 0 0 1 .5 11.200V3A.8 .8 0 0 1 1.300 2.200zM.5 5.300H12.500M3.800 .3V3.500M9.200 .3V3.500" fill="none" stroke="#bdbdbd" stroke-width="1"/></g></svg><svg style="left:176px;top:131px" width="11" height="8" viewBox="0 0 11 8"><g transform="translate(0 0.5)"><path d="M0 4H10M7 1L10 4 7 7" fill="none" stroke="#5a5a5a" stroke-width="1"/></g></svg><span id="t129" class="t " style="top:153px;font-size:11px;line-height:16px;color:#8c8c8c;left:37px;letter-spacing:-0.108px;font-style:italic;">* Tối đa 31 ngày</span><div class="b" style="left:402px;top:126px;width:16px;height:16px;border-radius:4px;background:#1677ff"></div><svg style="left:402px;top:126px" width="16" height="16" viewBox="0 0 16 16"><path d="M3.600 8.300L6.800 11.400 12.500 5.200" fill="none" stroke="#fff" stroke-width="2"/></svg><span id="t130" class="t " style="top:125px;font-size:13.2px;line-height:20px;color:#333;left:426.29999999999995px;letter-spacing:-.35px;">T2</span><div class="b" style="left:456px;top:126px;width:16px;height:16px;border-radius:4px;background:#1677ff"></div><svg style="left:456px;top:126px" width="16" height="16" viewBox="0 0 16 16"><path d="M3.600 8.300L6.800 11.400 12.500 5.200" fill="none" stroke="#fff" stroke-width="2"/></svg><span id="t131" class="t " style="top:125px;font-size:13.2px;line-height:20px;color:#333;left:480.29999999999995px;letter-spacing:-.35px;">T3</span><div class="b" style="left:510px;top:126px;width:16px;height:16px;border-radius:4px;background:#1677ff"></div><svg style="left:510px;top:126px" width="16" height="16" viewBox="0 0 16 16"><path d="M3.600 8.300L6.800 11.400 12.500 5.200" fill="none" stroke="#fff" stroke-width="2"/></svg><span id="t132" class="t " style="top:125px;font-size:13.2px;line-height:20px;color:#333;left:534.3px;letter-spacing:-.35px;">T4</span><div class="b" style="left:564px;top:126px;width:16px;height:16px;border-radius:4px;background:#1677ff"></div><svg style="left:564px;top:126px" width="16" height="16" viewBox="0 0 16 16"><path d="M3.600 8.300L6.800 11.400 12.500 5.200" fill="none" stroke="#fff" stroke-width="2"/></svg><span id="t133" class="t " style="top:125px;font-size:13.2px;line-height:20px;color:#333;left:588.3px;letter-spacing:-.35px;">T5</span><div class="b" style="left:618px;top:126px;width:16px;height:16px;border-radius:4px;background:#1677ff"></div><svg style="left:618px;top:126px" width="16" height="16" viewBox="0 0 16 16"><path d="M3.600 8.300L6.800 11.400 12.500 5.200" fill="none" stroke="#fff" stroke-width="2"/></svg><span id="t134" class="t " style="top:125px;font-size:13.2px;line-height:20px;color:#333;left:642.3px;letter-spacing:-.35px;">T6</span><div class="b" style="left:671px;top:126px;width:16px;height:16px;border-radius:4px;background:#1677ff"></div><svg style="left:671px;top:126px" width="16" height="16" viewBox="0 0 16 16"><path d="M3.600 8.300L6.800 11.400 12.500 5.200" fill="none" stroke="#fff" stroke-width="2"/></svg><span id="t135" class="t " style="top:125px;font-size:13.2px;line-height:20px;color:#333;left:695.3px;letter-spacing:-.35px;">T7</span><div class="b" style="left:725px;top:126px;width:16px;height:16px;border-radius:4px;background:#1677ff"></div><svg style="left:725px;top:126px" width="16" height="16" viewBox="0 0 16 16"><path d="M3.600 8.300L6.800 11.400 12.500 5.200" fill="none" stroke="#fff" stroke-width="2"/></svg><span id="t136" class="t " style="top:125px;font-size:13.2px;line-height:20px;color:#333;left:749.3px;letter-spacing:-.35px;">CN</span><div class="b" style="left:852px;top:126px;width:16px;height:16px;border-radius:4px;background:#1677ff"></div><svg style="left:852px;top:126px" width="16" height="16" viewBox="0 0 16 16"><path d="M3.600 8.300L6.800 11.400 12.500 5.200" fill="none" stroke="#fff" stroke-width="2"/></svg><span id="t137" class="t " style="top:125px;font-size:13.2px;line-height:20px;color:#333;left:876.3px;letter-spacing:-.35px;">Sáng</span><div class="b" style="left:921px;top:126px;width:16px;height:16px;border-radius:4px;background:#1677ff"></div><svg style="left:921px;top:126px" width="16" height="16" viewBox="0 0 16 16"><path d="M3.600 8.300L6.800 11.400 12.500 5.200" fill="none" stroke="#fff" stroke-width="2"/></svg><span id="t138" class="t " style="top:125px;font-size:13.2px;line-height:20px;color:#333;left:945.3px;letter-spacing:-.35px;">Chiều</span><div class="b" style="left:993px;top:126px;width:16px;height:16px;border-radius:4px;background:#1677ff"></div><svg style="left:993px;top:126px" width="16" height="16" viewBox="0 0 16 16"><path d="M3.600 8.300L6.800 11.400 12.500 5.200" fill="none" stroke="#fff" stroke-width="2"/></svg><span id="t139" class="t " style="top:125px;font-size:13.2px;line-height:20px;color:#333;left:1017.3px;letter-spacing:-.35px;">Tối</span><div class="b " style="left:20px;top:206px;width:677px;height:32px;background:#fff;border:1px solid #d9d9d9;border-radius:6px"></div><svg style="left:33px;top:216px" width="13" height="13" viewBox="0 0 13 13"><circle cx="5.200" cy="5.200" r="4.200" fill="none" stroke="#262626" stroke-width="1.900"/><path d="M8.300 8.300L12.100 12.100" stroke="#262626" stroke-width="2.100" stroke-linecap="round"/></svg><span id="t140" class="t " style="top:212px;font-size:14px;line-height:21px;color:#bfbfbf;left:50.5px;letter-spacing:-0.195px;">Tìm kiếm món ăn...</span><div class="b " style="left:20px;top:254px;width:677px;height:38px;background:#f8f9fa;border-radius:8px 8px 0 0"></div><div class="b " style="left:20px;top:292px;width:662px;height:1px;background:#f0f0f0"></div><div class="b " style="left:211px;top:262px;width:1px;height:22px;background:#f0f0f0"></div><div class="b " style="left:361px;top:262px;width:1px;height:22px;background:#f0f0f0"></div><div class="b " style="left:461px;top:262px;width:1px;height:22px;background:#f0f0f0"></div><div class="b " style="left:581px;top:262px;width:1px;height:22px;background:#f0f0f0"></div><span id="t141" class="t " style="top:263px;font-size:14px;line-height:21px;color:#262626;-webkit-text-stroke:.45px;left:28px;letter-spacing:0.042px;">Tên món</span><span id="t142" class="t " style="top:263px;font-size:14px;line-height:21px;color:#262626;-webkit-text-stroke:.45px;left:220px;letter-spacing:0.241px;">Danh mục</span><span id="t143" class="t " style="top:263px;font-size:14px;line-height:21px;color:#262626;-webkit-text-stroke:.45px;left:370px;letter-spacing:0.284px;">Đơn vị</span><span id="t144" class="t " style="top:263px;font-size:14px;line-height:21px;color:#262626;-webkit-text-stroke:.45px;left:470px;letter-spacing:0.036px;">Số lượng</span><span id="t145" class="t " style="top:263px;font-size:14px;line-height:21px;color:#262626;-webkit-text-stroke:.45px;left:590px;letter-spacing:0.145px;">Thao tác</span><span id="t146" class="t " style="top:304px;font-size:14px;line-height:21px;color:#262626;left:28px;letter-spacing:-0.141px;">Gỏi Ngó Sen Tôm Thịt</span><span id="t147" class="t " style="top:304px;font-size:14px;line-height:21px;color:#262626;left:220px;letter-spacing:-0.348px;">Gỏi</span><span id="t148" class="t " style="top:304px;font-size:14px;line-height:21px;color:#262626;left:370px;letter-spacing:-0.350px;">Đĩa</span><div class="b " style="left:470px;top:302px;width:70px;height:24px;background:#fff;border:1px solid #d9d9d9;border-radius:4px"></div><span id="t149" class="t " style="top:304px;font-size:14px;line-height:21px;color:#222;left:478.29999999999995px;letter-spacing:-0.350px;">1000</span><div class="b " style="left:590px;top:301px;width:100px;height:24px;background:#fff;border:1px solid #d9d9d9;border-radius:4px;box-shadow:0 2px 0 rgba(0,0,0,.02)"></div><svg style="left:598px;top:306px" width="14" height="14" viewBox="0 0 14 14"><path d="M7 1V13M1 7H13" stroke="#4a4a4a" stroke-width="1.300" fill="none"/></svg><span id="t150" class="t " style="top:303px;font-size:14px;line-height:21px;color:#262626;left:620px;letter-spacing:-0.118px;">Cập nhật</span><div class="b " style="left:20px;top:334px;width:662px;height:1px;background:#f0f0f0"></div><span id="t151" class="t " style="top:346px;font-size:14px;line-height:21px;color:#262626;left:28px;letter-spacing:-0.247px;">Gỏi Bò Bóp Thấu</span><span id="t152" class="t " style="top:346px;font-size:14px;line-height:21px;color:#262626;left:220px;letter-spacing:-0.348px;">Gỏi</span><span id="t153" class="t " style="top:346px;font-size:14px;line-height:21px;color:#262626;left:370px;letter-spacing:-0.350px;">Đĩa</span><div class="b " style="left:470px;top:344px;width:70px;height:24px;background:#fff;border:1px solid #d9d9d9;border-radius:4px"></div><span id="t154" class="t " style="top:346px;font-size:14px;line-height:21px;color:#222;left:478.29999999999995px;letter-spacing:-0.350px;">1000</span><div class="b " style="left:590px;top:343px;width:100px;height:24px;background:#fff;border:1px solid #d9d9d9;border-radius:4px;box-shadow:0 2px 0 rgba(0,0,0,.02)"></div><svg style="left:598px;top:348px" width="14" height="14" viewBox="0 0 14 14"><path d="M7 1V13M1 7H13" stroke="#4a4a4a" stroke-width="1.300" fill="none"/></svg><span id="t155" class="t " style="top:345px;font-size:14px;line-height:21px;color:#262626;left:620px;letter-spacing:-0.118px;">Cập nhật</span><div class="b " style="left:20px;top:376px;width:662px;height:1px;background:#f0f0f0"></div><span id="t156" class="t " style="top:388px;font-size:14px;line-height:21px;color:#262626;left:28px;letter-spacing:-0.136px;">Nem Nướng Nha Trang</span><span id="t157" class="t " style="top:388px;font-size:14px;line-height:21px;color:#262626;left:220px;letter-spacing:-0.040px;">Nem/Chả</span><span id="t158" class="t " style="top:388px;font-size:14px;line-height:21px;color:#262626;left:370px;letter-spacing:-0.350px;">Phần</span><div class="b " style="left:470px;top:386px;width:70px;height:24px;background:#fff;border:1px solid #d9d9d9;border-radius:4px"></div><span id="t159" class="t " style="top:388px;font-size:14px;line-height:21px;color:#222;left:478.29999999999995px;letter-spacing:-0.350px;">1000</span><div class="b " style="left:590px;top:385px;width:100px;height:24px;background:#fff;border:1px solid #d9d9d9;border-radius:4px;box-shadow:0 2px 0 rgba(0,0,0,.02)"></div><svg style="left:598px;top:390px" width="14" height="14" viewBox="0 0 14 14"><path d="M7 1V13M1 7H13" stroke="#4a4a4a" stroke-width="1.300" fill="none"/></svg><span id="t160" class="t " style="top:387px;font-size:14px;line-height:21px;color:#262626;left:620px;letter-spacing:-0.118px;">Cập nhật</span><div class="b " style="left:20px;top:418px;width:662px;height:1px;background:#f0f0f0"></div><span id="t161" class="t " style="top:429px;font-size:14px;line-height:21px;color:#262626;left:28px;letter-spacing:-0.456px;">Chả Giò Rế Hải Sản</span><span id="t162" class="t " style="top:429px;font-size:14px;line-height:21px;color:#262626;left:220px;letter-spacing:-0.040px;">Nem/Chả</span><span id="t163" class="t " style="top:429px;font-size:14px;line-height:21px;color:#262626;left:370px;letter-spacing:-0.350px;">Phần</span><div class="b " style="left:470px;top:427px;width:70px;height:24px;background:#fff;border:1px solid #d9d9d9;border-radius:4px"></div><span id="t164" class="t " style="top:429px;font-size:14px;line-height:21px;color:#222;left:478.29999999999995px;letter-spacing:-0.350px;">1000</span><div class="b " style="left:590px;top:427px;width:49px;height:24px;background:#1677ff;border-radius:4px;box-shadow:0 2px 0 rgba(5,145,255,.1)"></div><span id="t165" class="t " style="top:429px;font-size:14px;line-height:21px;color:#fff;left:598px;letter-spacing:-0.156px;">Chọn</span><div class="b " style="left:20px;top:459px;width:662px;height:1px;background:#f0f0f0"></div><span id="t166" class="t " style="top:470px;font-size:14px;line-height:21px;color:#262626;left:28px;letter-spacing:-0.406px;">Súp Hải Sản Bát Bảo</span><span id="t167" class="t " style="top:470px;font-size:14px;line-height:21px;color:#262626;left:220px;letter-spacing:-0.350px;">Súp</span><span id="t168" class="t " style="top:470px;font-size:14px;line-height:21px;color:#262626;left:370px;letter-spacing:-0.350px;">Bát</span><div class="b " style="left:470px;top:468px;width:70px;height:24px;background:#fff;border:1px solid #d9d9d9;border-radius:4px"></div><span id="t169" class="t " style="top:470px;font-size:14px;line-height:21px;color:#222;left:478.29999999999995px;letter-spacing:-0.350px;">1000</span><div class="b " style="left:590px;top:468px;width:49px;height:24px;background:#1677ff;border-radius:4px;box-shadow:0 2px 0 rgba(5,145,255,.1)"></div><span id="t170" class="t " style="top:470px;font-size:14px;line-height:21px;color:#fff;left:598px;letter-spacing:-0.156px;">Chọn</span><div class="b " style="left:20px;top:500px;width:662px;height:1px;background:#f0f0f0"></div><span id="t171" class="t " style="top:511px;font-size:14px;line-height:21px;color:#262626;left:28px;letter-spacing:-0.344px;">Súp Gà Nấm Hương</span><span id="t172" class="t " style="top:511px;font-size:14px;line-height:21px;color:#262626;left:220px;letter-spacing:-0.350px;">Súp</span><span id="t173" class="t " style="top:511px;font-size:14px;line-height:21px;color:#262626;left:370px;letter-spacing:-0.350px;">Bát</span><div class="b " style="left:470px;top:509px;width:70px;height:24px;background:#fff;border:1px solid #d9d9d9;border-radius:4px"></div><span id="t174" class="t " style="top:511px;font-size:14px;line-height:21px;color:#222;left:478.29999999999995px;letter-spacing:-0.350px;">1000</span><div class="b " style="left:590px;top:509px;width:49px;height:24px;background:#1677ff;border-radius:4px;box-shadow:0 2px 0 rgba(5,145,255,.1)"></div><span id="t175" class="t " style="top:511px;font-size:14px;line-height:21px;color:#fff;left:598px;letter-spacing:-0.156px;">Chọn</span><div class="b " style="left:20px;top:541px;width:662px;height:1px;background:#f0f0f0"></div><span id="t176" class="t " style="top:552px;font-size:14px;line-height:21px;color:#262626;left:28px;letter-spacing:-0.311px;">Salad Nga</span><span id="t177" class="t " style="top:552px;font-size:14px;line-height:21px;color:#262626;left:220px;letter-spacing:-0.350px;">Salad</span><span id="t178" class="t " style="top:552px;font-size:14px;line-height:21px;color:#262626;left:370px;letter-spacing:-0.350px;">Đĩa</span><div class="b " style="left:470px;top:550px;width:70px;height:24px;background:#fff;border:1px solid #d9d9d9;border-radius:4px"></div><span id="t179" class="t " style="top:552px;font-size:14px;line-height:21px;color:#222;left:478.29999999999995px;letter-spacing:-0.350px;">1000</span><div class="b " style="left:590px;top:550px;width:49px;height:24px;background:#1677ff;border-radius:4px;box-shadow:0 2px 0 rgba(5,145,255,.1)"></div><span id="t180" class="t " style="top:552px;font-size:14px;line-height:21px;color:#fff;left:598px;letter-spacing:-0.156px;">Chọn</span><div class="b " style="left:20px;top:582px;width:662px;height:1px;background:#f0f0f0"></div><span id="t181" class="t " style="top:593px;font-size:14px;line-height:21px;color:#262626;left:28px;letter-spacing:-0.502px;">Salad Caesar Gà Nướng</span><span id="t182" class="t " style="top:593px;font-size:14px;line-height:21px;color:#262626;left:220px;letter-spacing:-0.350px;">Salad</span><span id="t183" class="t " style="top:593px;font-size:14px;line-height:21px;color:#262626;left:370px;letter-spacing:-0.350px;">Đĩa</span><div class="b " style="left:470px;top:591px;width:70px;height:24px;background:#fff;border:1px solid #d9d9d9;border-radius:4px"></div><span id="t184" class="t " style="top:593px;font-size:14px;line-height:21px;color:#222;left:478.29999999999995px;letter-spacing:-0.350px;">1000</span><div class="b " style="left:590px;top:591px;width:49px;height:24px;background:#1677ff;border-radius:4px;box-shadow:0 2px 0 rgba(5,145,255,.1)"></div><span id="t185" class="t " style="top:593px;font-size:14px;line-height:21px;color:#fff;left:598px;letter-spacing:-0.156px;">Chọn</span><div class="b " style="left:20px;top:623px;width:662px;height:1px;background:#f0f0f0"></div><span id="t186" class="t " style="top:634px;font-size:14px;line-height:21px;color:#262626;left:28px;letter-spacing:-0.290px;">Bánh Khọt Vũng Tàu</span><span id="t187" class="t " style="top:634px;font-size:14px;line-height:21px;color:#262626;left:220px;letter-spacing:-0.360px;">Khác (Khai Vị)</span><span id="t188" class="t " style="top:634px;font-size:14px;line-height:21px;color:#262626;left:370px;letter-spacing:-0.350px;">Phần</span><div class="b " style="left:470px;top:632px;width:70px;height:24px;background:#fff;border:1px solid #d9d9d9;border-radius:4px"></div><span id="t189" class="t " style="top:634px;font-size:14px;line-height:21px;color:#222;left:478.29999999999995px;letter-spacing:-0.350px;">1000</span><div class="b " style="left:590px;top:632px;width:49px;height:24px;background:#1677ff;border-radius:4px;box-shadow:0 2px 0 rgba(5,145,255,.1)"></div><span id="t190" class="t " style="top:634px;font-size:14px;line-height:21px;color:#fff;left:598px;letter-spacing:-0.156px;">Chọn</span><div class="b " style="left:20px;top:664px;width:662px;height:1px;background:#f0f0f0"></div><span id="t191" class="t " style="top:674px;font-size:14px;line-height:21px;color:#262626;left:28px;letter-spacing:-0.428px;">Khoai Tây Chiên Lắc Phô</span><span id="t192" class="t " style="top:696px;font-size:14px;line-height:21px;color:#262626;left:28px;letter-spacing:0.319px;">Mai</span><span id="t193" class="t " style="top:685px;font-size:14px;line-height:21px;color:#262626;left:220px;letter-spacing:-0.360px;">Khác (Khai Vị)</span><span id="t194" class="t " style="top:685px;font-size:14px;line-height:21px;color:#262626;left:370px;letter-spacing:-0.350px;">Đĩa</span><div class="b " style="left:470px;top:683px;width:70px;height:24px;background:#fff;border:1px solid #d9d9d9;border-radius:4px"></div><span id="t195" class="t " style="top:685px;font-size:14px;line-height:21px;color:#222;left:478.29999999999995px;letter-spacing:-0.350px;">1000</span><div class="b " style="left:590px;top:683px;width:49px;height:24px;background:#1677ff;border-radius:4px;box-shadow:0 2px 0 rgba(5,145,255,.1)"></div><span id="t196" class="t " style="top:685px;font-size:14px;line-height:21px;color:#fff;left:598px;letter-spacing:-0.156px;">Chọn</span><div class="b " style="left:20px;top:725px;width:662px;height:1px;background:#f0f0f0"></div><div class="b " style="left:682px;top:292px;width:15px;height:439px;background:#f1f1f1"></div><div class="b " style="left:20px;top:731px;width:677px;height:15px;background:#f1f1f1"></div><div class="b " style="left:685px;top:311px;width:9px;height:36.5px;background:#a8a8a8;border-radius:4.500px"></div><div class="b " style="left:37.5px;top:734px;width:624.5px;height:8.5px;background:#a8a8a8;border-radius:4.500px"></div><svg style="left:685px;top:298px" width="9" height="5" viewBox="0 0 9 5"><g transform="translate(0 0.5)"><path d="M0 5L4.500 0 9 5z" fill="#a3a3a3"/></g></svg><svg style="left:685px;top:718px" width="9" height="5" viewBox="0 0 9 5"><g transform="translate(0 0.5)"><path d="M0 0L4.500 5 9 0z" fill="#a3a3a3"/></g></svg><svg style="left:25px;top:734px" width="5" height="9" viewBox="0 0 5 9"><path d="M5 0L0 4.500 5 9z" fill="#a3a3a3"/></svg><svg style="left:671px;top:734px" width="5" height="9" viewBox="0 0 5 9"><path d="M0 0L5 4.500 0 9z" fill="#a3a3a3"/></svg><div class="b " style="left:717px;top:206px;width:2px;height:227px;background:#dcdcdc"></div><span id="t197" class="t " style="top:207px;font-size:16px;line-height:24px;color:#52c41a;font-weight:700;left:739px;letter-spacing:0.132px;">Món đã chọn (3)</span><div class="b " style="left:739px;top:238px;width:378px;height:2px;background:#52c41a"></div><div class="b " style="left:739px;top:256px;width:370px;height:49px;background:#fff;border:1px solid #e2e2e2;border-radius:8px"></div><span id="t198" class="t " style="top:271px;font-size:13.5px;line-height:20px;color:#52c41a;font-weight:700;left:752.5px;">1.</span><span id="t199" class="t " style="top:272px;font-size:14px;line-height:21px;color:#141414;font-weight:700;left:770px;letter-spacing:-0.111px;">Gỏi Ngó Sen Tôm Thịt</span><span id="t200" class="t " style="top:271px;font-size:14px;line-height:21px;color:#45454a;left:1040.5px;letter-spacing:-0.350px;">1000</span><svg style="left:1083px;top:274px" width="12.500" height="12.500" viewBox="0 0 12.500 12.500"><g transform="translate(0 0.5)"><path d="M.5 2.900H12M4 2.700V.9H8.500V2.700M1.900 3.100L2.400 11.100A.9 .9 0 0 0 3.300 11.900H9.200A.9 .9 0 0 0 10.100 11.100L10.600 3.100" fill="none" stroke="#ff4d4f" stroke-width="1.200"/></g></svg><div class="b " style="left:739px;top:315px;width:370px;height:49px;background:#fff;border:1px solid #e2e2e2;border-radius:8px"></div><span id="t201" class="t " style="top:330px;font-size:13.5px;line-height:20px;color:#52c41a;font-weight:700;left:752.5px;">2.</span><span id="t202" class="t " style="top:331px;font-size:14px;line-height:21px;color:#141414;font-weight:700;left:770px;letter-spacing:-0.223px;">Gỏi Bò Bóp Thấu</span><span id="t203" class="t " style="top:330px;font-size:14px;line-height:21px;color:#45454a;left:1040.5px;letter-spacing:-0.350px;">1000</span><svg style="left:1083px;top:333px" width="12.500" height="12.500" viewBox="0 0 12.500 12.500"><g transform="translate(0 0.5)"><path d="M.5 2.900H12M4 2.700V.9H8.500V2.700M1.900 3.100L2.400 11.100A.9 .9 0 0 0 3.300 11.900H9.200A.9 .9 0 0 0 10.100 11.100L10.600 3.100" fill="none" stroke="#ff4d4f" stroke-width="1.200"/></g></svg><div class="b " style="left:739px;top:374px;width:370px;height:49px;background:#fff;border:1px solid #e2e2e2;border-radius:8px"></div><span id="t204" class="t " style="top:389px;font-size:13.5px;line-height:20px;color:#52c41a;font-weight:700;left:752.5px;">3.</span><span id="t205" class="t " style="top:390px;font-size:14px;line-height:21px;color:#141414;font-weight:700;left:770px;letter-spacing:0.045px;">Nem Nướng Nha Trang</span><span id="t206" class="t " style="top:389px;font-size:14px;line-height:21px;color:#45454a;left:1040.5px;letter-spacing:-0.350px;">1000</span><svg style="left:1083px;top:392px" width="12.500" height="12.500" viewBox="0 0 12.500 12.500"><g transform="translate(0 0.5)"><path d="M.5 2.900H12M4 2.700V.9H8.500V2.700M1.900 3.100L2.400 11.100A.9 .9 0 0 0 3.300 11.900H9.200A.9 .9 0 0 0 10.100 11.100L10.600 3.100" fill="none" stroke="#ff4d4f" stroke-width="1.200"/></g></svg><div class="b " style="left:0px;top:881px;width:1138px;height:1px;background:#f0f0f0"></div><span id="t207" class="t " style="top:909px;font-size:14px;line-height:21px;color:#666;left:16px;letter-spacing:0.091px;">Hiển thị 110 món ăn</span><div class="b " style="left:864px;top:902px;width:56px;height:32px;background:#fff;border:1px solid #d9d9d9;border-radius:6px;box-shadow:0 2px 0 rgba(0,0,0,.02)"></div><span id="t208" class="t " style="top:908px;font-size:14px;line-height:21px;color:#262626;left:880px;letter-spacing:0.047px;">Hủy</span><div class="b " style="left:928px;top:902px;width:208px;height:32px;background:#52c41a;border-radius:6px;box-shadow:0 2px 0 rgba(5,145,255,.1)"></div><span id="t209" class="t " style="top:908px;font-size:14px;line-height:21px;color:#fff;left:944.5px;letter-spacing:-0.057px;">Lưu (9 ngày × 3 ca × 3 món)</span></div>
<div id="topline"></div>
</body></html>
